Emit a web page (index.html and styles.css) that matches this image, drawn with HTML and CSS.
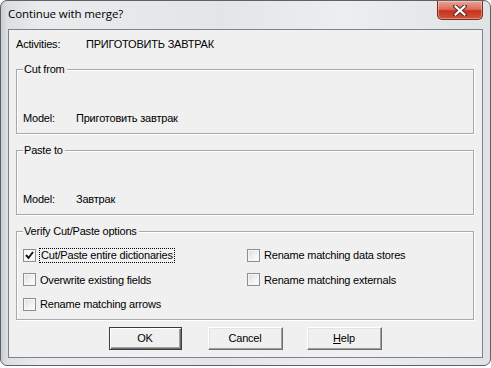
FILE: index.html
```html
<!DOCTYPE html>
<html>
<head>
<meta charset="utf-8">
<link rel="stylesheet" href="styles.css">
</head>
<body>
<div class="window">
  <div class="titlebar">
    <span class="title">Continue with merge?</span>
    <div class="close">
      <svg width="14" height="11" viewBox="0 0 14 11">
        <path d="M2 1 L12 10 M12 1 L2 10" stroke="#5a2a22" stroke-width="4" stroke-linecap="square"/>
        <path d="M2.5 1.5 L11.5 9.5 M11.5 1.5 L2.5 9.5" stroke="#fff" stroke-width="2.2" stroke-linecap="square"/>
      </svg>
    </div>
  </div>
  <div class="client">
    <div class="row activities">
      <span class="lbl-act">Activities:</span>
      <span>ПРИГОТОВИТЬ ЗАВТРАК</span>
    </div>
    <div class="group model-group">
      <span class="legend">Cut from</span>
      <div class="row">
        <span class="lbl-model">Model:</span>
        <span>Приготовить завтрак</span>
      </div>
    </div>
    <div class="group model-group">
      <span class="legend">Paste to</span>
      <div class="row">
        <span class="lbl-model">Model:</span>
        <span>Завтрак</span>
      </div>
    </div>
    <div class="group options">
      <span class="legend">Verify Cut/Paste options</span>
      <div class="opt-grid">
        <div class="opt"><span class="cb checked"><svg width="9" height="9" viewBox="0 0 9 9"><path d="M1 4 L3.5 7 L8 1" fill="none" stroke="#1a1a1a" stroke-width="2"/></svg></span><span class="focus">Cut/Paste entire dictionaries</span></div>
        <div class="opt"><span class="cb"></span><span>Rename matching data stores</span></div>
        <div class="opt"><span class="cb"></span><span>Overwrite existing fields</span></div>
        <div class="opt"><span class="cb"></span><span>Rename matching externals</span></div>
        <div class="opt"><span class="cb"></span><span>Rename matching arrows</span></div>
      </div>
    </div>
    <div class="buttons">
      <div class="btn default">OK</div>
      <div class="btn">Cancel</div>
      <div class="btn"><u>H</u>elp</div>
    </div>
  </div>
</div>
</body>
</html>
```

FILE: styles.css
```css
html, body {
  margin: 0;
  padding: 0;
  background: #ffffff;
}
.window {
  width: 491px;
  height: 366px;
  box-sizing: border-box;
  border: 1px solid #5e6166;
  border-radius: 7px;
  background: linear-gradient(to right, #c9ccd0 0px, #dcdfe2 6px, #e9ebed 40px, #e3e5e8 45%, #eceeef 70%, #e0e3e6 100%);
  padding: 0 7px 7px 7px;
  display: flex;
  flex-direction: column;
  font-family: "Liberation Sans", Arial, sans-serif;
  font-size: 11px;
  letter-spacing: -0.2px;
  color: #000;
}
.titlebar {
  height: 28px;
  display: flex;
  justify-content: space-between;
  align-items: flex-start;
}
.title {
  font-family: "Open Sans", "Noto Sans", sans-serif;
  font-size: 11.5px;
  margin-top: 5px;
  color: #000;
  letter-spacing: -0.1px;
}
.close {
  width: 46px;
  height: 19px;
  box-sizing: border-box;
  border: 1px solid #7c2a20;
  border-top: none;
  border-radius: 0 0 5px 5px;
  background: linear-gradient(to bottom, #e9a596 0%, #db6e5b 45%, #c6311c 55%, #d2543c 100%);
  box-shadow: inset 0 0 0 1px rgba(255,255,255,0.35);
  display: flex;
  align-items: center;
  justify-content: center;
}
.client {
  flex: 1;
  border: 1px solid #7f8286;
  background: #f0f0f0;
  padding: 0 8px 0 7px;
  display: flex;
  flex-direction: column;
}
.row {
  display: flex;
  line-height: 13px;
  height: 13px;
}
.activities {
  margin-top: 8px;
}
.lbl-act {
  width: 70px;
}
.lbl-model {
  width: 53px;
}
.group {
  position: relative;
  border: 1px solid #a9a9a9;
  box-shadow: inset 1px 1px 0 #ffffff, 1px 1px 0 #ffffff;
  margin-top: 16px;
}
.model-group {
  padding: 42px 0 0 6px;
  box-sizing: border-box;
  height: 65px;
}
.activities + .model-group {
  margin-top: 18px;
}
.legend {
  position: absolute;
  left: 6px;
  top: -7px;
  line-height: 13px;
  padding: 0 2px 0 1px;
  background: #f0f0f0;
}
.options {
  height: 89px;
  box-sizing: border-box;
  padding: 11px 0 0 6px;
}
.opt-grid {
  display: grid;
  grid-template-columns: 224px 1fr;
  grid-auto-rows: 24.5px;
}
.opt {
  display: flex;
  align-items: center;
}
.cb {
  width: 13px;
  height: 13px;
  box-sizing: border-box;
  border: 1px solid #8e8f8f;
  background: linear-gradient(135deg, #dcdcdc 0%, #f4f4f4 60%, #ffffff 100%);
  box-shadow: inset 0 0 0 1px #f6f6f6;
  margin-right: 4px;
  display: flex;
  align-items: center;
  justify-content: center;
  flex-shrink: 0;
}
.cb.checked {
  background: #fbfbfb;
}
.focus {
  outline: 1px dotted #000;
  outline-offset: 0px;
  padding: 0 1px;
  line-height: 13px;
}
.buttons {
  display: flex;
  justify-content: center;
  gap: 24px;
  margin-top: 7px;
}
.btn {
  width: 75px;
  height: 23px;
  box-sizing: border-box;
  border: 1px solid;
  border-color: #ffffff #6d6d6d #6d6d6d #ffffff;
  box-shadow: inset -1px -1px 0 #a0a0a0, inset 1px 1px 0 #e3e3e3;
  background: #f0f0f0;
  display: flex;
  align-items: center;
  justify-content: center;
  padding-bottom: 1px;
}
.btn.default {
  border: 1px solid #3c3c3c;
  box-shadow: inset 1px 1px 0 #ffffff, inset -1px -1px 0 #6d6d6d, inset -2px -2px 0 #a0a0a0;
  width: 73px;
  margin-right: 2px;
}
.btn u {
  text-decoration: underline;
}
```
